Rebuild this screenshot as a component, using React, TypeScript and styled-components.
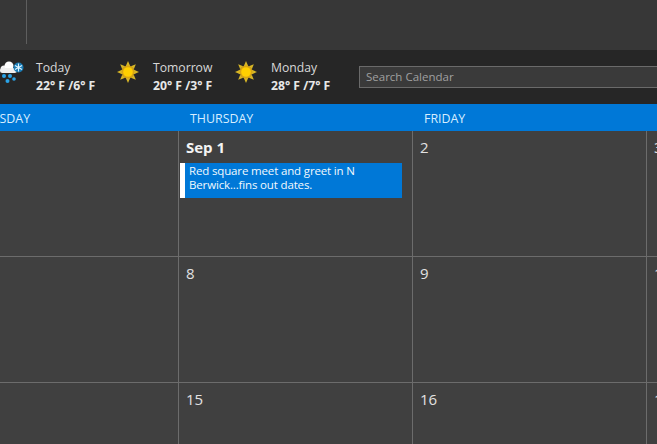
import React from 'react'
import styled, { createGlobalStyle } from 'styled-components'

const GlobalStyle = createGlobalStyle`
  html, body {
    margin: 0;
    padding: 0;
    background: #404040;
    overflow: hidden;
  }
  body {
    font-family: "Open Sans", "Noto Sans", sans-serif;
  }
`

const Page = styled.div`
  width: 657px;
  height: 444px;
  overflow: hidden;
  display: flex;
  flex-direction: column;
`

const TopBar = styled.div`
  height: 50px;
  flex: none;
  background: #373737;
  padding-left: 26px;
  box-sizing: border-box;
`

const TopDivider = styled.div`
  width: 1px;
  height: 44px;
  background: #5e5e5e;
`

const WeatherBar = styled.div`
  height: 54px;
  flex: none;
  background: #262626;
  display: flex;
  align-items: center;
  box-sizing: border-box;
  padding-bottom: 1px;
`

const Forecast = styled.div<{ $width: number }>`
  flex: none;
  width: ${p => p.$width}px;
  display: flex;
  align-items: center;
`

const IconSlot = styled.div<{ $left: number }>`
  flex: none;
  width: 24px;
  height: 22px;
  margin-left: ${p => p.$left}px;
  margin-right: 12px;
  margin-bottom: 9px;
`

const ForecastText = styled.div`
  display: flex;
  flex-direction: column;
  white-space: nowrap;
  margin-top: 1px;
`

const ForecastDay = styled.span`
  font-size: 12.2px;
  line-height: 18px;
  color: #d8d8d8;
`

const ForecastTemp = styled.span`
  font-size: 12.2px;
  line-height: 18px;
  font-weight: 700;
  color: #e8e8e8;
`

const SearchBox = styled.div`
  flex: none;
  width: 320px;
  height: 22px;
  box-sizing: border-box;
  border: 1px solid #6a6a6a;
  background: #3a3a3a;
  color: #a0a0a0;
  font-size: 11.5px;
  line-height: 19px;
  padding-left: 6px;
`

const CalendarWrap = styled.div`
  margin-left: -55px;
  flex: 1;
  display: flex;
  flex-direction: column;
  min-height: 0;
`

const DayHeader = styled.div`
  height: 27px;
  flex: none;
  background: #0078d7;
  display: grid;
  grid-template-columns: repeat(4, 234px);
`

const DayName = styled.div`
  font-size: 12.4px;
  line-height: 29px;
  padding-left: 11px;
  color: #d8eeff;
  white-space: nowrap;
`

const MonthGrid = styled.div`
  display: grid;
  grid-template-columns: repeat(4, 234px);
  grid-template-rows: 126px 126px 126px;
`

const DayCell = styled.div`
  box-sizing: border-box;
  border-right: 1px solid #6c6c6c;
  border-bottom: 1px solid #6c6c6c;
  padding-top: 6px;
  min-width: 0;
  overflow: hidden;
`

const DayNumber = styled.div<{ $first?: boolean }>`
  padding-left: 7px;
  height: 20px;
  font-size: 15px;
  line-height: 20px;
  color: ${p => (p.$first ? '#f4f4f4' : '#e2e2e2')};
  font-weight: ${p => (p.$first ? 700 : 400)};
`

const EventCard = styled.div`
  margin: 6px 10px 0 1px;
  height: 35px;
  box-sizing: border-box;
  background: #0078d7;
  border-left: 5px solid #ffffff;
  padding: 1px 0 0 4px;
  font-size: 11.5px;
  letter-spacing: -0.15px;
  line-height: 14px;
  color: #f2f8fd;
`

const SnowIcon = () => (
  <svg width="24" height="22" viewBox="0 0 24 22">
    <circle cx="4" cy="8" r="3.5" fill="#f2f2f2" />
    <circle cx="9" cy="5" r="4.5" fill="#ffffff" />
    <rect x="0" y="7" width="17" height="5" rx="2.5" fill="#efefef" />
    <circle cx="18.5" cy="6.5" r="5" fill="#1a7bb4" />
    <path d="M18.5 2.5v8M15 4.5l7 4M22 4.5l-7 4" stroke="#dff4ff" strokeWidth="1.1" />
    <circle cx="4" cy="15" r="2" fill="#2aa4e8" />
    <circle cx="10" cy="15" r="2" fill="#2aa4e8" />
    <circle cx="7.5" cy="20" r="2" fill="#2aa4e8" />
    <circle cx="14" cy="18" r="1.8" fill="#2aa4e8" />
  </svg>
)

const SunIcon = () => (
  <svg width="24" height="22" viewBox="1 0 24 22">
    <g fill="#d8b726">
      <path d="M12 0l2.2 5h-4.4z" />
      <path d="M12 22l2.2-5h-4.4z" />
      <path d="M1 11l5-2.2v4.4z" />
      <path d="M23 11l-5-2.2v4.4z" />
      <path d="M4.2 3.2l5 2-3 3z" />
      <path d="M19.8 3.2l-5 2 3 3z" />
      <path d="M4.2 18.8l5-2-3-3z" />
      <path d="M19.8 18.8l-5-2 3-3z" />
    </g>
    <circle cx="12" cy="11" r="6.4" fill="#d9a514" />
    <circle cx="12" cy="11" r="4.8" fill="#ffd000" />
  </svg>
)

const forecasts = [
  { day: 'Today', temp: '22° F /6° F', icon: <SnowIcon />, left: 0, width: 116 },
  { day: 'Tomorrow', temp: '20° F /3° F', icon: <SunIcon />, left: 1, width: 119 },
  { day: 'Monday', temp: '28° F /7° F', icon: <SunIcon />, left: 0, width: 124 },
]

const dayNames = ['WEDNESDAY', 'THURSDAY', 'FRIDAY', 'SATURDAY']

const weeks = [
  ['31', 'Sep 1', '2', '3'],
  ['7', '8', '9', '10'],
  ['14', '15', '16', '17'],
]

export default function App() {
  return (
    <Page>
      <GlobalStyle />
      <TopBar>
        <TopDivider />
      </TopBar>
      <WeatherBar>
        {forecasts.map(f => (
          <Forecast key={f.day} $width={f.width}>
            <IconSlot $left={f.left}>{f.icon}</IconSlot>
            <ForecastText>
              <ForecastDay>{f.day}</ForecastDay>
              <ForecastTemp>{f.temp}</ForecastTemp>
            </ForecastText>
          </Forecast>
        ))}
        <SearchBox>Search Calendar</SearchBox>
      </WeatherBar>
      <CalendarWrap>
        <DayHeader>
          {dayNames.map(d => (
            <DayName key={d}>{d}</DayName>
          ))}
        </DayHeader>
        <MonthGrid>
          {weeks.flat().map((d, i) => (
            <DayCell key={d + i}>
              {i % 4 === 0 ? null : <DayNumber $first={d === 'Sep 1'}>{d}</DayNumber>}
              {d === 'Sep 1' && (
                <EventCard>
                  Red square meet and greet in N
                  <br />
                  Berwick...fins out dates.
                </EventCard>
              )}
            </DayCell>
          ))}
        </MonthGrid>
      </CalendarWrap>
    </Page>
  )
}
